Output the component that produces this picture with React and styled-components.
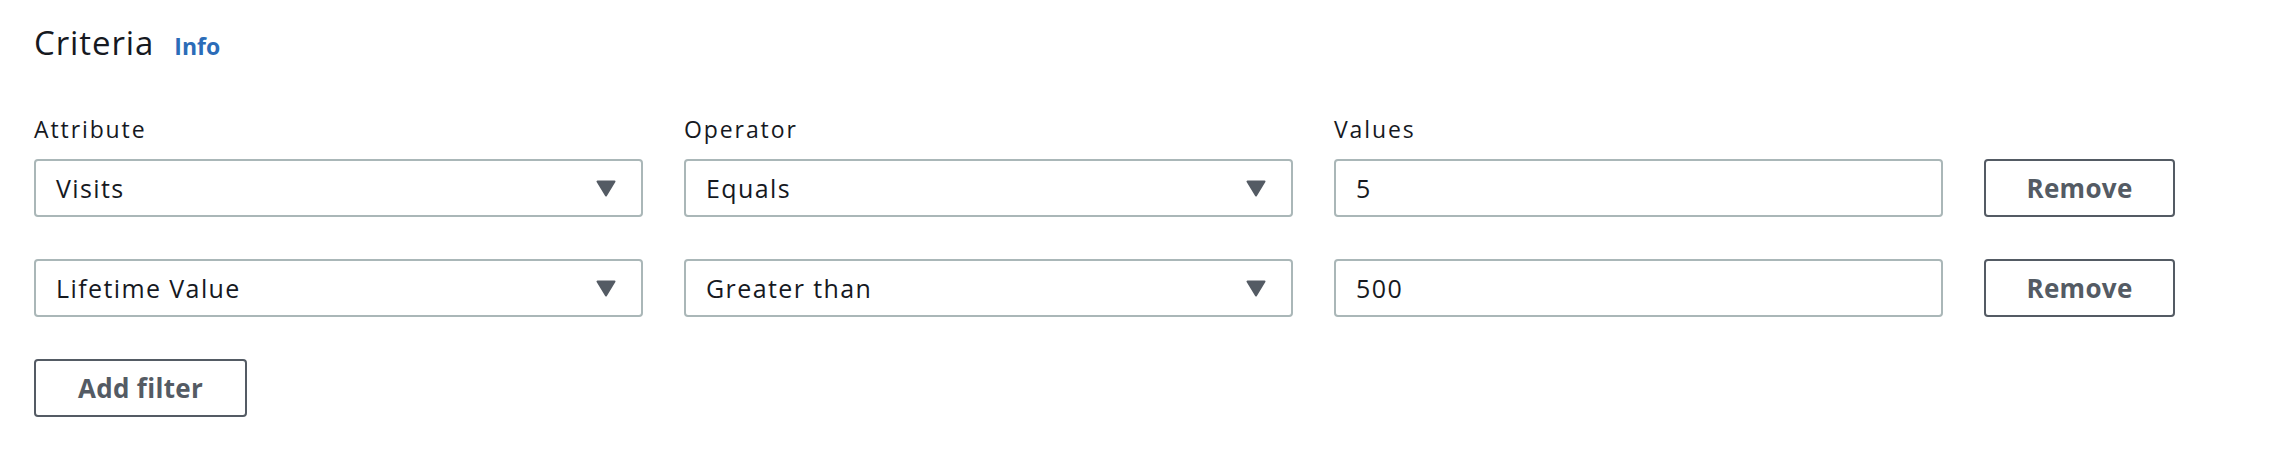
import styled, { createGlobalStyle } from 'styled-components';

const GlobalStyle = createGlobalStyle`
  body {
    margin: 0;
    background: #ffffff;
    font-family: "Open Sans", "Noto Sans", sans-serif;
    color: #16191f;
  }
`;

const rows = [
  { attribute: 'Visits', operator: 'Equals', value: '5' },
  { attribute: 'Lifetime Value', operator: 'Greater than', value: '500' },
];

function Caret() {
  return (
    <svg width="20" height="17" viewBox="0 0 20 17">
      <path d="M1.5 1.5 H18.5 L10 15.5 Z" fill="#545b64" stroke="#545b64" strokeWidth="2" strokeLinejoin="round" />
    </svg>
  );
}

function App() {
  return (
    <Page>
      <GlobalStyle />
      <Header>
        <Title>Criteria</Title>
        <InfoLink href="#">Info</InfoLink>
      </Header>
      <Grid>
        <Label>Attribute</Label>
        <Label>Operator</Label>
        <Label>Values</Label>
        <span />
        {rows.map((row) => (
          <Row key={row.attribute}>
            <Select>
              <span>{row.attribute}</span>
              <Caret />
            </Select>
            <Select>
              <span>{row.operator}</span>
              <Caret />
            </Select>
            <Input>{row.value}</Input>
            <Button>Remove</Button>
          </Row>
        ))}
      </Grid>
      <AddButton>Add filter</AddButton>
    </Page>
  );
}

const Page = styled.div`
  padding: 20px 0 0 34px;
  width: 2141px;
`;

const Header = styled.div`
  display: flex;
  align-items: baseline;
  gap: 20px;
  height: 50px;
`;

const Title = styled.h2`
  margin: 0;
  font-size: 33px;
  font-weight: 400;
  letter-spacing: 0.9px;
  line-height: 46px;
  color: #16191f;
`;

const InfoLink = styled.a`
  font-size: 23px;
  font-weight: 700;
  color: #2b6cb8;
  text-decoration: none;
`;

const Grid = styled.div`
  display: grid;
  grid-template-columns: 1fr 1fr 1fr 191px;
  column-gap: 41px;
  row-gap: 42px;
  margin-top: 44px;
`;

const Row = styled.div`
  display: contents;
`;

const Label = styled.div`
  font-size: 23px;
  letter-spacing: 1.9px;
  line-height: 30px;
  margin-bottom: -27px;
  color: #16191f;
`;

const Field = styled.div`
  box-sizing: border-box;
  height: 58px;
  border: 2px solid #aab7b8;
  border-radius: 4px;
  display: flex;
  align-items: center;
  padding: 0 20px;
  font-size: 25px;
  letter-spacing: 1.4px;
  color: #16191f;
  background: #fff;
`;

const Select = styled(Field)`
  justify-content: space-between;
  padding-right: 25px;
`;

const Input = styled(Field)``;

const Button = styled.button`
  box-sizing: border-box;
  height: 58px;
  width: ${(p) => p.$width || '100%'};
  border: 2px solid #545b64;
  border-radius: 4px;
  background: #fff;
  color: #545b64;
  font-family: inherit;
  font-size: 26px;
  font-weight: 700;
  letter-spacing: 0.3px;
  cursor: pointer;
`;

const AddButton = styled(Button).attrs({ $width: '213px' })`
  margin-top: 42px;
`;

export default App;
